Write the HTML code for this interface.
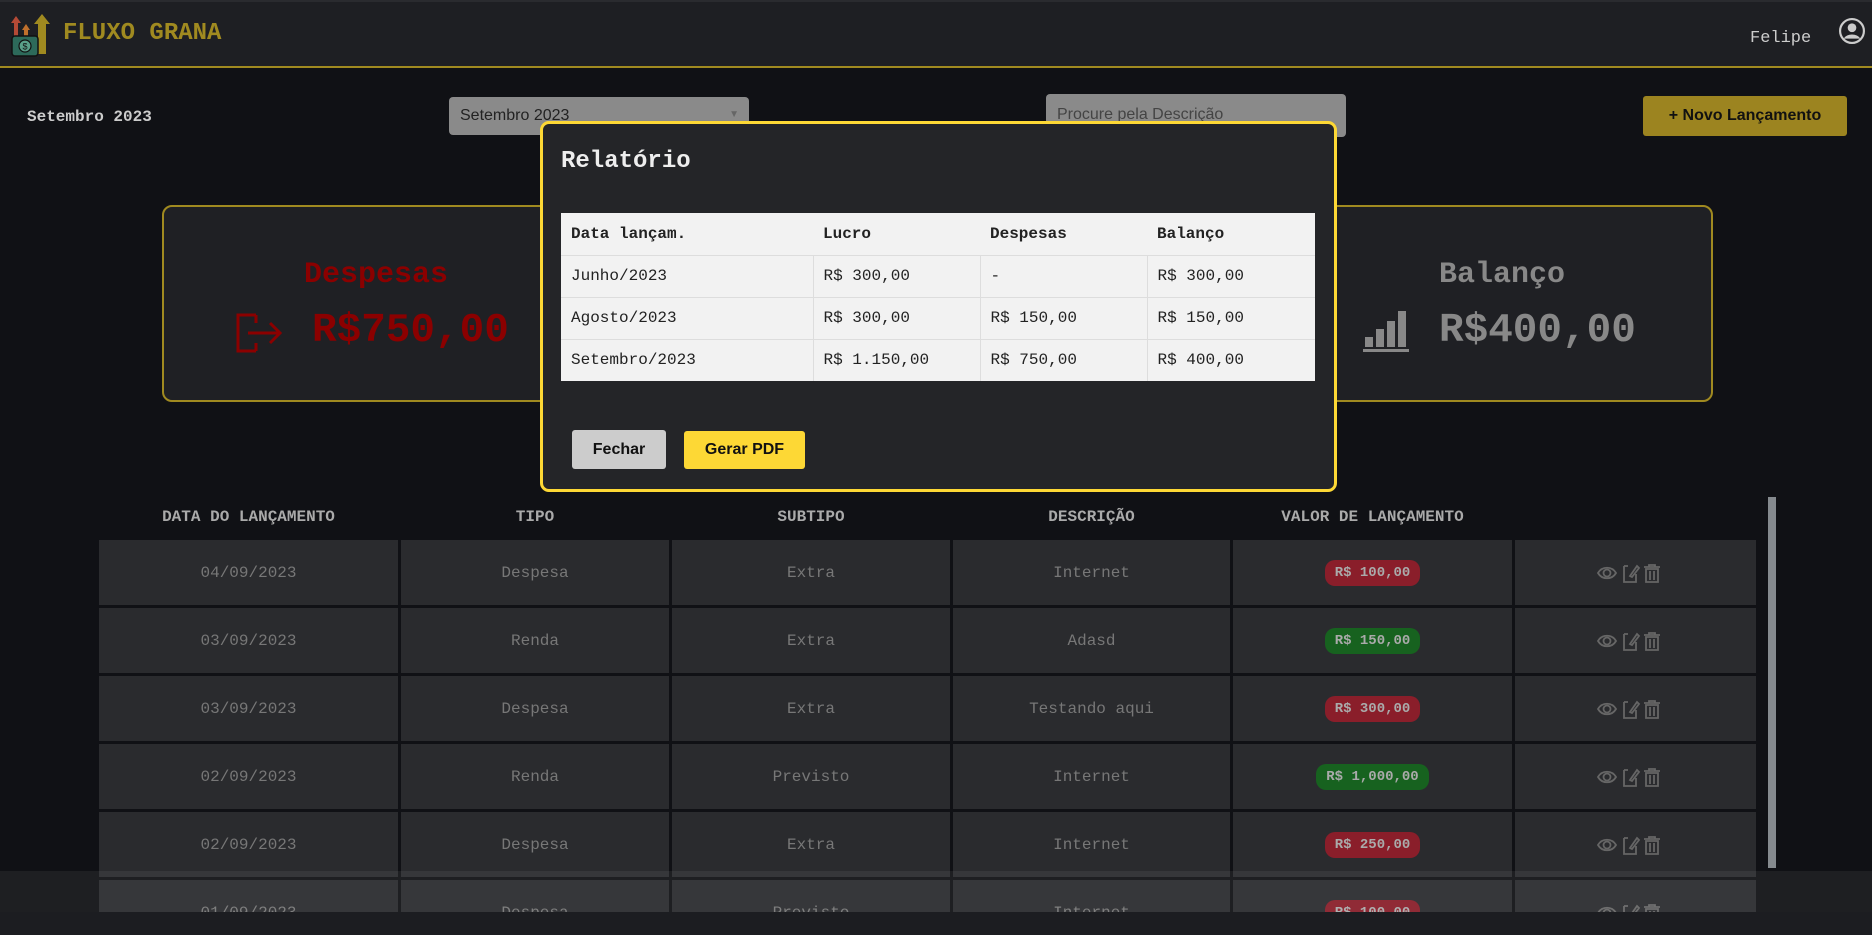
<!DOCTYPE html>
<html><head><meta charset="utf-8"><style>
*{box-sizing:border-box;margin:0;padding:0}
body{width:1872px;height:935px;overflow:hidden;background:#101115;font-family:"Liberation Mono",monospace;position:relative}
.abs{position:absolute}
.hdr{left:0;top:0;width:1872px;height:68px;background:#1e1f23;border-top:2px solid #2a2b2f;border-bottom:2px solid #a08a20}
.title{left:63px;top:20px;font-size:24px;font-weight:bold;color:#a08a20;letter-spacing:0}
.card{border:2px solid #a08a20;border-radius:10px;background:#1f2024;top:205px;height:197px}
table.rep{border-collapse:collapse;width:754px;background:#f2f2f2;font-size:16px;color:#222}
table.rep td{height:42px;padding:0 10px;border-top:1px solid #ddd;border-left:1px solid #ddd}
table.rep tr:first-child td{border-top:none;border-left:none;font-weight:bold}
table.rep td:first-child{border-left:none}
.th{top:508px;font-size:16px;font-weight:bold;color:#aaa;text-align:center}
.row{left:99px;width:1657px;height:65px;display:flex;gap:3px}
.row div{background:#2a2b2e;display:flex;align-items:center;justify-content:center;color:#777;font-size:16px;flex-shrink:0}
.pill{padding:0 10px;height:26px;border-radius:10px;font-weight:bold;font-size:14px;color:#aaa;display:flex;align-items:center}
.red{background:#8a1e2a}.green{background:#17621f}
</style></head><body>
<div class="abs hdr"></div>
<svg class="abs" style="left:10px;top:14px" width="42" height="44" viewBox="0 0 42 44">
<path d="M6 2 L1 9 H4 V24 H8 V9 H11 Z" fill="#b44a36"/>
<path d="M16 10 L12 16 H14 V26 H18 V16 H20 Z" fill="#c0702c"/>
<path d="M32 0 L24 10 H28 V40 H36 V10 H40 Z" fill="#a08a20"/>
<rect x="2" y="22" width="26" height="20" rx="3" fill="#2d6a5a" stroke="#111" stroke-width="1.5"/>
<circle cx="15" cy="32" r="6" fill="#5aa08a" stroke="#111" stroke-width="1.2"/>
<text x="12.5" y="35.5" font-size="9" fill="#111" font-family="Liberation Sans">$</text>
</svg>
<div class="abs title">FLUXO GRANA</div>
<div class="abs" style="left:1750px;top:29px;font-size:17px;color:#ccc">Felipe</div>
<svg class="abs" style="left:1839px;top:18px" width="26" height="26" viewBox="0 0 24 24"><circle cx="12" cy="12" r="11" fill="none" stroke="#ccc" stroke-width="2"/><circle cx="12" cy="9" r="4" fill="#ccc"/><path d="M4.5 19 C7 14 17 14 19.5 19" fill="#ccc"/></svg>

<div class="abs" style="left:27px;top:108px;font-size:16px;font-weight:bold;color:#ccc">Setembro 2023</div>
<div class="abs" style="left:449px;top:97px;width:300px;height:38px;background:#8a8a8a;border-radius:4px;font-family:'Liberation Sans';font-size:16px;color:#222;padding:10px 11px">Setembro 2023<span style="position:absolute;right:10px;top:12px;font-size:10px;color:#666">▼</span></div>
<div class="abs" style="left:1046px;top:94px;width:300px;height:43px;background:#8a8a8a;border-radius:4px;font-family:'Liberation Sans';font-size:16px;color:#444;padding:12px 11px">Procure pela Descrição</div>
<div class="abs" style="left:1643px;top:96px;width:204px;height:40px;background:#9c8420;border-radius:3px;font-family:'Liberation Sans';font-size:16px;font-weight:bold;color:#111;text-align:center;line-height:40px">+ Novo Lançamento</div>

<div class="abs card" style="left:162px;width:460px">
<div class="abs" style="left:140px;top:51px;font-size:30px;font-weight:bold;color:#8b0000">Despesas</div>
<svg class="abs" style="left:70px;top:106px" width="52" height="40" viewBox="0 0 52 40"><path d="M22 2 H4 V38 H22 M22 2 V10 M22 30 V38 M14 20 H46 M36 10 L46 20 L36 30" fill="none" stroke="#8b0000" stroke-width="3"/></svg>
<div class="abs" style="left:148px;top:101px;font-size:41px;font-weight:bold;color:#8b0000">R$750,00</div>
</div>
<div class="abs card" style="left:1253px;width:460px">
<div class="abs" style="left:184px;top:51px;font-size:30px;font-weight:bold;color:#888">Balanço</div>
<svg class="abs" style="left:106px;top:100px" width="50" height="46" viewBox="0 0 50 46"><rect x="2" y="42" width="46" height="3" fill="#888"/><rect x="4" y="30" width="8" height="10" fill="#888"/><rect x="15" y="22" width="8" height="18" fill="#888"/><rect x="26" y="14" width="8" height="26" fill="#888"/><rect x="37" y="4" width="8" height="36" fill="#888"/></svg>
<div class="abs" style="left:184px;top:101px;font-size:41px;font-weight:bold;color:#888">R$400,00</div>
</div>

<div class="abs" style="left:540px;top:121px;width:797px;height:371px;background:#242528;border:3px solid #fdd835;border-radius:9px">
<div class="abs" style="left:18px;top:24px;font-size:24px;font-weight:bold;color:#eee">Relatório</div>
<table class="abs rep" style="left:18px;top:89px">
<tr><td style="width:252px">Data lançam.</td><td style="width:167px">Lucro</td><td style="width:167px">Despesas</td><td>Balanço</td></tr>
<tr><td>Junho/2023</td><td>R$ 300,00</td><td>-</td><td>R$ 300,00</td></tr>
<tr><td>Agosto/2023</td><td>R$ 300,00</td><td>R$ 150,00</td><td>R$ 150,00</td></tr>
<tr><td>Setembro/2023</td><td>R$ 1.150,00</td><td>R$ 750,00</td><td>R$ 400,00</td></tr>
</table>
<div class="abs" style="left:29px;top:306px;width:94px;height:39px;background:#cccccc;border-radius:3px;font-family:'Liberation Sans';font-weight:bold;font-size:16px;color:#111;text-align:center;line-height:39px">Fechar</div>
<div class="abs" style="left:141px;top:307px;width:121px;height:38px;background:#fdd835;border-radius:3px;font-family:'Liberation Sans';font-weight:bold;font-size:16px;color:#111;text-align:center;line-height:38px">Gerar PDF</div>
</div>

<div class="abs th" style="left:99px;width:299px">DATA DO LANÇAMENTO</div>
<div class="abs th" style="left:401px;width:268px">TIPO</div>
<div class="abs th" style="left:672px;width:278px">SUBTIPO</div>
<div class="abs th" style="left:953px;width:277px">DESCRIÇÃO</div>
<div class="abs th" style="left:1233px;width:279px">VALOR DE LANÇAMENTO</div>
<div class="abs" style="left:1768px;top:497px;width:8px;height:371px;background:#858a8e"></div>

<div class="abs" style="left:0;top:0;width:1872px;height:912px;overflow:hidden">
<div id="rows"></div>
</div>
<div class="abs" style="left:0;top:871px;width:1872px;height:64px;background:rgba(255,255,255,0.06)"></div>
<div class="abs" style="left:0;top:912px;width:1872px;height:23px;background:#1c1d21"></div>

<script>
var d=[["04/09/2023","Despesa","Extra","Internet","R$ 100,00","red"],["03/09/2023","Renda","Extra","Adasd","R$ 150,00","green"],["03/09/2023","Despesa","Extra","Testando aqui","R$ 300,00","red"],["02/09/2023","Renda","Previsto","Internet","R$ 1,000,00","green"],["02/09/2023","Despesa","Extra","Internet","R$ 250,00","red"],["01/09/2023","Despesa","Previsto","Internet","R$ 100,00","red"]];
var ic='<svg width="80" height="22" viewBox="0 0 80 22"><g fill="none" stroke="#666" stroke-width="1.8"><path d="M2 11 C6 4 16 4 20 11 C16 18 6 18 2 11Z"/><circle cx="11" cy="11" r="3.5"/><path d="M28 4 H32 M28 4 V20 H40 V12 M34 14 L41 4 L43 6 L36 15 Z"/><path d="M48 5 H64 M53 5 V3 H59 V5 M50 7 H62 V20 H50 Z M54 9 V18 M58 9 V18"/></g></svg>';
var h='';d.forEach(function(r,i){var t=540+i*68;h+='<div class="abs row" style="top:'+t+'px"><div style="width:299px">'+r[0]+'</div><div style="width:268px">'+r[1]+'</div><div style="width:278px">'+r[2]+'</div><div style="width:277px">'+r[3]+'</div><div style="width:279px"><span class="pill '+r[5]+'">'+r[4]+'</span></div><div style="width:241px">'+ic+'</div></div>';});
document.getElementById('rows').innerHTML=h;
</script>
</body></html>
